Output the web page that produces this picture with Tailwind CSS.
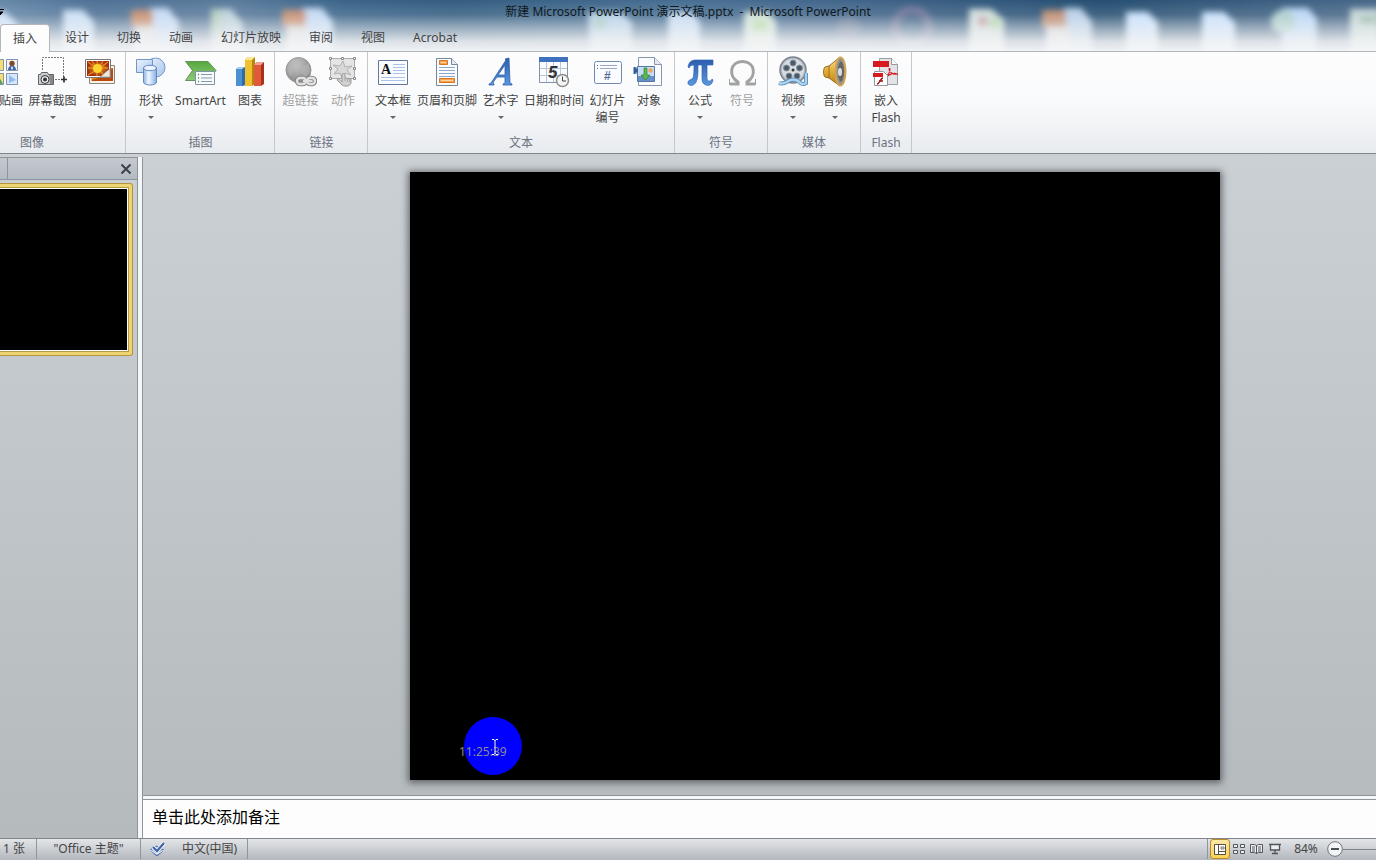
<!DOCTYPE html>
<html lang="zh-CN">
<head>
<meta charset="utf-8">
<title>新建 Microsoft PowerPoint 演示文稿.pptx - Microsoft PowerPoint</title>
<script src="https://cdn.jsdelivr.net/npm/@tailwindcss/browser@4"></script>
</head>
<body class="flex h-screen flex-col overflow-hidden bg-[#c5cacf] font-['Noto_Sans','Noto_Sans_CJK_SC',sans-serif] text-xs text-[#444444]">

<header class="relative flex shrink-0 flex-col overflow-hidden">
  <!-- glass title bar: blurred desktop icons fading to white -->
  <svg class="absolute inset-0 h-full w-full" viewBox="0 0 1376 52" preserveAspectRatio="none" aria-hidden="true">
    <defs>
      <linearGradient id="sky" x1="0" x2="1" y1="0" y2="0"><stop offset="0" stop-color="#6688a9"/><stop offset=".07" stop-color="#4d7094"/><stop offset=".17" stop-color="#5a7b9c"/><stop offset=".25" stop-color="#3a6489"/><stop offset=".33" stop-color="#335d80"/><stop offset=".5" stop-color="#486f93"/><stop offset=".62" stop-color="#41658a"/><stop offset=".8" stop-color="#254e71"/><stop offset="1" stop-color="#49698a"/></linearGradient>
      <linearGradient id="fade" x1="0" x2="0" y1="0" y2="1"><stop offset="0" stop-color="#fff" stop-opacity="0"/><stop offset=".28" stop-color="#f2f3f4" stop-opacity=".14"/><stop offset=".55" stop-color="#f2f3f4" stop-opacity=".55"/><stop offset=".8" stop-color="#f3f4f5" stop-opacity=".88"/><stop offset="1" stop-color="#f6f7f8" stop-opacity=".98"/></linearGradient>
      <filter id="soft" x="-5%" y="-50%" width="110%" height="200%"><feGaussianBlur stdDeviation="3.2"/></filter>
    </defs>
    <rect width="1376" height="52" fill="url(#sky)"/>
    <g filter="url(#soft)">
      <path d="M-5 12h10l13 13v30H-5z" fill="#cfe2fa"/>
      <path d="M63 10h20l11 12v33H63z" fill="#c9dff5"/>
      <path d="M150 8h18l11 14v33h-29z" fill="#c4daf5"/><rect x="131" y="10" width="22" height="17" rx="3" fill="#c58c6c"/><rect x="134" y="27" width="22" height="28" fill="#d9dcde"/>
      <path d="M211 9h20l12 15v31h-32z" fill="#bdd2db"/><path d="M211 9h10v24h-10z" fill="#b3cdbd"/>
      <path d="M302 8h20l11 14v33h-31z" fill="#c4daf5"/><rect x="282" y="10" width="24" height="17" rx="3" fill="#c68d70"/><rect x="286" y="27" width="22" height="28" fill="#d9dcde"/>
      <path d="M588 12h32l12 10v33h-42z" fill="#b5d0e8"/><circle cx="600" cy="24" r="7" fill="#9dc7bf"/>
      <path d="M668 12h23l9 10v33h-32z" fill="#c5dcf3"/>
      <path d="M744 12h24l8 10v33h-32z" fill="#d5e5dd"/><rect x="752" y="20" width="16" height="13" fill="#b1d8a0"/>
      <circle cx="912" cy="27" r="17" fill="none" stroke="#8d7fa5" stroke-width="8" opacity=".6"/><circle cx="848" cy="28" r="12" fill="#7f83a0" opacity=".5"/>
      <path d="M969 9h22l13 11v35h-35z" fill="#d2dfdd"/><rect x="978" y="17" width="9" height="10" fill="#c0919c"/><rect x="989" y="19" width="11" height="10" fill="#a8d39b"/>
      <path d="M1064 8h17l11 14v33h-28z" fill="#b7cfe8"/><rect x="1042" y="10" width="24" height="19" rx="4" fill="#bd8a6e"/><rect x="1046" y="28" width="24" height="27" fill="#d9dadd"/>
      <path d="M1126 12h22l10 11v32h-32z" fill="#c8e1fc"/>
      <path d="M1202 12h22l11 11v32h-33z" fill="#c8e1fc"/>
      <path d="M1282 8h26l9 11v36h-35z" fill="#b9d7f7"/><circle cx="1283" cy="22" r="12" fill="#a9cdc9"/>
      <path d="M1350 9h30v46h-30z" fill="#c3d6d5"/><rect x="1360" y="17" width="16" height="7" fill="#91b3a0"/>
    </g>
    <rect width="1376" height="52" fill="url(#fade)"/>
  </svg>
  <svg class="absolute left-0 top-2 h-2 w-1" viewBox="0 0 4 8" aria-hidden="true"><path d="M0 1.5h4M0 4h3L0 7z" stroke="#000" fill="#000"/></svg>
  <h1 class="relative h-6 whitespace-pre text-center text-xs leading-6 text-[#101820]">新建 Microsoft PowerPoint 演示文稿.pptx  -  Microsoft PowerPoint</h1>
  <nav class="relative flex h-7 border-b border-[#b3b6bb] leading-7">
    <button class="mr-px h-7 rounded-t border border-b-0 border-[#b3b6bb] bg-[#fdfdfe] px-3 leading-6">插入</button>
    <button class="px-[14px]">设计</button>
    <button class="px-[14px]">切换</button>
    <button class="px-[14px]">动画</button>
    <button class="px-[14px]">幻灯片放映</button>
    <button class="px-[14px]">审阅</button>
    <button class="px-[14px]">视图</button>
    <button class="px-[14px]">Acrobat</button>
  </nav>
</header>

<!-- gradients shared by the ribbon icons -->
<svg class="absolute size-0" aria-hidden="true">
  <defs>
    <linearGradient id="blue" x1="0" x2="1" y1="0" y2="1"><stop offset="0" stop-color="#eef5fd"/><stop offset="1" stop-color="#a5c4ec"/></linearGradient>
    <linearGradient id="cyl" x1="0" x2="1"><stop offset="0" stop-color="#8fb5e6"/><stop offset=".4" stop-color="#f0f7ff"/><stop offset="1" stop-color="#85aee3"/></linearGradient>
    <linearGradient id="deep" x1="0" x2="0" y1="0" y2="1"><stop offset="0" stop-color="#2b5eae"/><stop offset="1" stop-color="#5c97df"/></linearGradient>
    <linearGradient id="green" x1="0" x2="0" y1="0" y2="1"><stop offset="0" stop-color="#57a93f"/><stop offset="1" stop-color="#8cc978"/></linearGradient>
    <radialGradient id="globe" cx=".4" cy=".3" r=".7"><stop offset="0" stop-color="#c9c9c9"/><stop offset="1" stop-color="#888"/></radialGradient>
    <linearGradient id="gold" x1="0" x2="0" y1="0" y2="1"><stop offset="0" stop-color="#fbe49a"/><stop offset=".5" stop-color="#e2ac32"/><stop offset="1" stop-color="#b67b18"/></linearGradient>
    <radialGradient id="sun"><stop offset="0" stop-color="#ffd53a"/><stop offset="1" stop-color="#a83010"/></radialGradient>
  </defs>
</svg>

<section class="flex h-[102px] shrink-0 border-b border-[#80868c] bg-linear-to-b from-[#fdfdfe] via-[#f9fafb] to-[#e8ebef] leading-[17px]" aria-label="插入">
  <div class="flex w-[126px] flex-col justify-between overflow-hidden border-r border-[#c3c8ce] pb-[2px] pt-1">
    <div class="flex justify-end whitespace-nowrap pr-1">
      <button class="flex w-[42px] shrink-0 flex-col items-center">
        <svg class="mb-1 size-8" viewBox="0 0 32 32"><g stroke="#8294b3"><path d="M3.500 3.500h11v11h-11zM3.500 17.500h11v11h-11z" fill="#f5df6a"/><path d="M17.500 3.500h11v11h-11z" fill="#f7f2ed"/><path d="M17.500 17.500h11v11h-11z" fill="#d6e8fb"/></g><path d="M5 26l4-7 5 9H5z" fill="#50a260"/><circle cx="23" cy="7.500" r="2.700" fill="#7c4a2b"/><path d="M19 14c0-6 8-6 8 0z" fill="#3c65ae"/><path d="M22 12l1-2 1 2-1 2z" fill="#fff"/><path d="M20 19l7 5-7 3z" fill="#94b9ec"/></svg>
        <span>剪贴画</span></button>
      <button class="flex w-[53px] shrink-0 flex-col items-center">
        <svg class="mb-1 size-8" viewBox="0 0 32 32"><path d="M5.500 14V1.500h21V22M18 23.500h9" fill="none" stroke="#777" stroke-dasharray="2 1"/><path d="M27 20.500v6M24 23.500h6" stroke="#333" stroke-width="1.700"/><path d="M1.500 18.500h2l1-2h6l1 2h5v10h-15z" fill="#c9ccd0" stroke="#666"/><path d="M12 19h4v9h-3z" fill="#888"/><circle cx="8" cy="23.500" r="4" fill="#eee" stroke="#333"/><circle cx="8" cy="23.500" r="2" fill="#333"/></svg>
        <span>屏幕截图</span><span class="mt-[7px] border-x-[3px] border-t-[3px] border-x-transparent border-t-[#666]"></span></button>
      <button class="flex w-[42px] shrink-0 flex-col items-center">
        <svg class="mb-1 size-8" viewBox="0 0 32 32"><path d="M5.500 9.500h25v18h-25z" fill="#f7f2e5" stroke="#8d877c"/><path d="M7.500 12h21v13h-21z" fill="#d88618"/><path d="M8 24l10-3 11-9v13H8z" fill="#b94a0e"/><path d="M1.500 3.500h25v18h-25z" fill="#fff" stroke="#777"/><path d="M3 5h22v15H3z" fill="#7c2112"/><path d="M3 5h22v15H3z" fill="url(#sun)" opacity=".8"/><path d="M4 6l7 5M13 5l1 6M24 6l-7 5M4 19l7-4M13 20v-5M20 19l-4-4M4 12h7M24 12h-7M8 5l4 6M19 5l-4 6" stroke="#ee8b16" stroke-width="1.300"/><circle cx="13.500" cy="12.500" r="4.500" fill="#ffd42f"/><path d="M16 21c3-2 5-5 10-8v8z" fill="#eee8da" stroke="#999" stroke-width=".7"/></svg>
        <span>相册</span><span class="mt-[7px] border-x-[3px] border-t-[3px] border-x-transparent border-t-[#666]"></span></button>
    </div>
    <div class="pl-5 text-[#6b7280]">图像</div>
  </div>
  <div class="flex flex-col justify-between border-r border-[#c3c8ce] pb-[2px] pl-1 pr-[3px] pt-1">
    <div class="flex whitespace-nowrap">
      <button class="flex w-[42px] flex-col items-center">
        <svg class="mb-1 size-8" viewBox="0 0 32 32"><circle cx="20.500" cy="11.500" r="9.500" fill="url(#blue)" stroke="#7296c7"/><path d="M1.500 3.500h16v13h-16z" fill="url(#blue)" stroke="#7296c7"/><path d="M8.500 12v14c0 4 13 4 13 0V12z" fill="url(#cyl)" stroke="#6489be"/><ellipse cx="15" cy="12" rx="6.500" ry="2.700" fill="#eaf3ff" stroke="#6489be"/></svg>
        <span>形状</span><span class="mt-[7px] border-x-[3px] border-t-[3px] border-x-transparent border-t-[#666]"></span></button>
      <button class="flex w-[57px] flex-col items-center">
        <svg class="mb-1 size-8" viewBox="0 0 32 32"><path d="M.500 5.500H23l8 9-8 10H.500l7-10z" fill="url(#green)" stroke="#64925a"/><path d="M10.500 15.500h19v13h-19z" fill="#f7fafc" stroke="#8193a5"/><path d="M13 18.500h1M13 22h1M13 25.500h1" stroke="#3b8f42" stroke-width="1.500"/><path d="M16 18.500h11M16 22h11M16 25.500h11" stroke="#8799a8"/></svg>
        <span>SmartArt</span></button>
      <button class="flex w-[42px] flex-col items-center">
        <svg class="mb-1 size-8" viewBox="0 0 32 32"><path d="M2 13l3-2h6v18l-2 1H2z" fill="#2e6cae"/><path d="M2 13h6v17H2z" fill="#4b91cf"/><path d="M2 13l3-2h6l-3 2z" fill="#a6d0ee"/><path d="M11 4l3-3h7v27l-3 2h-7z" fill="#b8860f"/><path d="M11 4h7v26h-7z" fill="#f0c12c"/><path d="M11 4l3-3h7l-3 3z" fill="#fbe98f"/><path d="M20 9l3-3h7v22l-3 2h-7z" fill="#a9301a"/><path d="M20 9h7v21h-7z" fill="#df593a"/><path d="M20 9l3-3h7l-3 3z" fill="#f2a18e"/></svg>
        <span>图表</span></button>
    </div>
    <div class="text-center text-[#6b7280]">插图</div>
  </div>
  <div class="flex flex-col justify-between border-r border-[#c3c8ce] pb-[2px] pl-1 pr-[3px] pt-1">
    <div class="flex whitespace-nowrap text-[#a0a0a0]">
      <button class="flex w-[43px] flex-col items-center">
        <svg class="mb-1 size-8" viewBox="0 0 32 32"><circle cx="13.500" cy="14" r="12.500" fill="url(#globe)" stroke="#999"/><path d="M4 8l7-4 5 3-2 5-6 2-2 6-3-4zM17 10l7-2 1 8-4 5-5-4z" fill="#b5b5b5" opacity=".6"/><g fill="none" stroke="#888" stroke-width="4.500"><rect x="12" y="22" width="9" height="6" rx="3"/><rect x="22" y="22" width="8" height="6" rx="3"/></g><g fill="none" stroke="#e2e2e2" stroke-width="2.300"><rect x="12" y="22" width="9" height="6" rx="3"/><rect x="22" y="22" width="8" height="6" rx="3"/><path d="M18 25h7"/></g></svg>
        <span>超链接</span></button>
      <button class="flex w-[42px] flex-col items-center">
        <svg class="mb-1 size-8" viewBox="0 0 32 32"><path d="M3.500 2.500h24v20h-24z" fill="#e5e5e5" stroke="#aaa"/><path d="M16 5l2 6 7-1-5 4 4 5-6-2-3 5-2-5-6 1 4-5-5-4 7 1z" fill="#d8d8d8" stroke="#b2b2b2"/><g fill="#fff" stroke="#888"><path d="M2.500 1.500h2v2h-2zM14.500 1.500h2v2h-2zM26.500 1.500h2v2h-2zM2.500 11.500h2v2h-2zM26.500 11.500h2v2h-2zM2.500 21.500h2v2h-2zM26.500 21.500h2v2h-2z"/></g><path d="M15 26v-7c0-2 3-2 3 0v3l6 1v4c-1 4-8 4-10 1l-4-4c1-2 3-1 5 2z" fill="#d0d0d0" stroke="#999"/><path d="M18 22v3M20.500 22.500v3M22.500 23v3" stroke="#aaa"/></svg>
        <span>动作</span></button>
    </div>
    <div class="text-center text-[#6b7280]">链接</div>
  </div>
  <div class="flex flex-col justify-between border-r border-[#c3c8ce] pb-[2px] pl-1 pr-1 pt-1">
    <div class="flex whitespace-nowrap">
      <button class="flex w-[42px] flex-col items-center">
        <svg class="mb-1 size-8" viewBox="0 0 32 32"><path d="M1.500 4.500h29v24h-29z" fill="#fafcff" stroke="#61779d"/><path d="M16 8.500h12M16 11.500h12M16 14.500h12M16 17.500h12M4 21.500h24M4 24.500h24" stroke="#a9c2e8"/><text x="4" y="18" font-family="Liberation Serif" font-weight="700" font-size="14" fill="#111">A</text></svg>
        <span>文本框</span><span class="mt-[7px] border-x-[3px] border-t-[3px] border-x-transparent border-t-[#666]"></span></button>
      <button class="flex w-[66px] flex-col items-center">
        <svg class="mb-1 size-8" viewBox="0 0 32 32"><path d="M5.500 2.500h15l6 6v21h-21z" fill="#fbfcff" stroke="#75889e"/><path d="M20.500 2.500v6h6" fill="#e2e9f3" stroke="#75889e"/><path d="M8 11.500h16M8 14.500h16M8 17.500h16M8 20.500h16" stroke="#8fa6c8"/><path d="M8.500 4.500h8v4h-8zM8.500 22.500h15v4h-15z" fill="#f5a44f" stroke="#d57620"/><path d="M10 6.500h5M10 24.500h12" stroke="#fcd2a0"/></svg>
        <span>页眉和页脚</span></button>
      <button class="flex w-[41px] flex-col items-center">
        <svg class="mb-1 size-8" viewBox="0 0 32 32"><path d="M24 2l1 25 2 1v1H18v-1l2-1v-6h-8l-3 4-1 2 1 1v1H4v-1l2-1L21 4l-1-1zM20 9l-7 10h7z" fill="url(#deep)" stroke="#2e61ac" stroke-width=".8"/></svg>
        <span>艺术字</span><span class="mt-[7px] border-x-[3px] border-t-[3px] border-x-transparent border-t-[#666]"></span></button>
      <button class="flex w-[66px] flex-col items-center">
        <svg class="mb-1 size-8" viewBox="0 0 32 32"><path d="M1.500 1.500h28v25h-28z" fill="#f9fbff" stroke="#8393aa"/><path d="M1 1h29v5H1z" fill="#3e70c0"/><path d="M8.500 6v20M15.500 6v20M22.500 6v20M2 12.500h27M2 19.500h27" stroke="#bac6d6"/><text x="10" y="22" font-family="Liberation Sans" font-weight="700" font-style="italic" font-size="17" fill="#333">5</text><circle cx="24.500" cy="24.500" r="6" fill="#f5f5f5" stroke="#8b8b8b" stroke-width="1.500"/><path d="M24.500 20.500v4.500h3.500" fill="none" stroke="#444"/></svg>
        <span>日期和时间</span></button>
      <button class="flex w-[41px] flex-col items-center">
        <svg class="mb-1 size-8" viewBox="0 0 32 32"><rect x="2.500" y="5.500" width="27" height="22" rx="2" fill="#fafcff" stroke="#7188b3"/><path d="M8 9.500h17M8 12.500h17" stroke="#97a9c7"/><path d="M5 9.500h1M5 12.500h1" stroke="#667"/><text x="12" y="24" font-family="Liberation Sans" font-weight="700" font-size="12" fill="#586d9b">#</text></svg>
        <span>幻灯片</span><span>编号</span></button>
      <button class="flex w-[42px] flex-col items-center">
        <svg class="mb-1 size-8" viewBox="0 0 32 32"><path d="M5.500 1.500h16l7 7v21h-23z" fill="#f9fbff" stroke="#8997ae"/><path d="M21.500 1.500v7h7" fill="#e2e8f2" stroke="#8997ae"/><path d="M4.500 10.500h17v15h-17z" fill="#c5ddf7" stroke="#5675a3"/><path d="M5 20h16v5H5z" fill="#6592c9"/><circle cx="17.500" cy="14.500" r="2.200" fill="#f1a35f"/><path d="M11 12h3v7h3l-4.500 5L8 19h3z" fill="#5fba4c" stroke="#2c7c31" stroke-width=".7"/><path d="M3 11v7M1 11l4 3.500L1 18z" fill="#345c99" stroke="#345c99"/></svg>
        <span>对象</span></button>
    </div>
    <div class="text-center text-[#6b7280]">文本</div>
  </div>
  <div class="flex flex-col justify-between border-r border-[#c3c8ce] pb-[2px] pl-1 pr-1 pt-1">
    <div class="flex whitespace-nowrap">
      <button class="flex w-[42px] flex-col items-center">
        <svg class="mb-1 size-8" viewBox="0 0 32 32"><path d="M4 11C5 6 7 4 12 4h17v5h-6v13c0 4 4 4 5 1l1 1c-1 5-4 6-7 5-3-1-4-3-4-7V9h-4c0 9 0 13-2 17-2 5-9 4-8 0 1-3 4-2 5-4 1-3 1-8 1-13-3 0-4 1-5 3z" fill="url(#deep)" stroke="#2f67b5" stroke-width=".7"/></svg>
        <span>公式</span><span class="mt-[7px] border-x-[3px] border-t-[3px] border-x-transparent border-t-[#666]"></span></button>
      <button class="flex w-[42px] flex-col items-center text-[#a0a0a0]">
        <svg class="mb-1 size-8" viewBox="0 0 32 32"><path d="M4 28h8v-2C2 20 4 5.500 16.500 5.500S31 20 21 26v2h8" fill="none" stroke="#a2a2a2" stroke-width="3"/><path d="M3.500 23v6M29.500 23v6" stroke="#a2a2a2"/></svg>
        <span>符号</span></button>
    </div>
    <div class="text-center text-[#6b7280]">符号</div>
  </div>
  <div class="flex flex-col justify-between border-r border-[#c3c8ce] pb-[2px] pl-1 pr-1 pt-1">
    <div class="flex whitespace-nowrap">
      <button class="flex w-[42px] flex-col items-center">
        <svg class="mb-1 size-8" viewBox="0 0 32 32"><circle cx="16" cy="14" r="13" fill="#b3bac3" stroke="#7b8590" stroke-width="1.500"/><circle cx="16" cy="14" r="11" fill="#d7dce1"/><g fill="#4b5a69" stroke="#87919b"><circle cx="16" cy="7" r="3"/><circle cx="9.500" cy="12" r="3"/><circle cx="22.500" cy="12" r="3"/><circle cx="12" cy="20" r="3"/><circle cx="20" cy="20" r="3"/></g><circle cx="16" cy="14" r="1.500" fill="#333"/><path d="M2 27c7 3 10-6 17-3 5 2 5 6 10 3V17" fill="none" stroke="#557fa9" stroke-width="4"/><path d="M2 27c7 3 10-6 17-3 5 2 5 6 10 3V17" fill="none" stroke="#a9d3f0" stroke-width="2.500"/></svg>
        <span>视频</span><span class="mt-[7px] border-x-[3px] border-t-[3px] border-x-transparent border-t-[#666]"></span></button>
      <button class="flex w-[42px] flex-col items-center">
        <svg class="mb-1 size-8" viewBox="0 0 32 32"><path d="M6 11l4-1L21 1v29L10 22l-4-1c-2-2-2-8 0-10z" fill="url(#gold)" stroke="#9b6a22"/><path d="M10 10v12" stroke="#9b6a22"/><ellipse cx="21.500" cy="15.500" rx="5" ry="14" fill="#8e8e8e" stroke="#d0a557" stroke-width="2"/><ellipse cx="22" cy="15.500" rx="3" ry="10" fill="#666"/><ellipse cx="21" cy="16" rx="2" ry="4" fill="#ddd"/></svg>
        <span>音频</span><span class="mt-[7px] border-x-[3px] border-t-[3px] border-x-transparent border-t-[#666]"></span></button>
    </div>
    <div class="text-center text-[#6b7280]">媒体</div>
  </div>
  <div class="flex flex-col justify-between border-r border-[#c3c8ce] pb-[2px] pl-1 pr-1 pt-1">
    <button class="flex w-[42px] flex-col items-center">
      <svg class="mb-1 size-8" viewBox="0 0 32 32"><path d="M9.500 2.500h12l6 6v20h-18z" fill="#e1e3e6" stroke="#9c9fa3"/><path d="M21.500 2.500v6h6" fill="#fff" stroke="#999"/><path d="M3 5h16v6H3z" fill="#d71920"/><path d="M17 20c4-4 3-9 2-7 0 3 4 6 8 5-4-2-7 1-10 2" fill="none" stroke="#d71920" stroke-width="1.200"/><path d="M4.500 15.500h9l4 4v10h-13z" fill="#fff" stroke="#999"/><path d="M3 17h10v4H3z" fill="#d71920"/><path d="M13 22c-3 0-3 6-6 6M9 25h4" fill="none" stroke="#9d1016" stroke-width="1.500"/></svg>
      <span>嵌入</span><span>Flash</span></button>
    <div class="text-center text-[#6b7280]">Flash</div>
  </div>
</section>

<main class="flex min-h-0 flex-1 bg-linear-to-b from-[#cbd0d5] to-[#b5babd] pt-[3px]">
  <aside class="flex w-[137px] shrink-0 flex-col border-t border-[#8d949b]">
    <div class="flex h-[22px] items-center border-b border-[#8d949b] bg-linear-to-b from-[#c5cad0] to-[#b4bac1]">
      <div class="h-full w-2 border-r border-[#8d949b]"></div>
      <button class="ml-auto mr-[5px]" aria-label="关闭"><svg class="block size-3" viewBox="0 0 12 12"><path d="M1.500 1.500l9 9M10.500 1.500l-9 9" stroke="#3c424a" stroke-width="2"/></svg></button>
    </div>
    <div class="mr-1 mt-[3px] rounded-r-[3px] border border-l-0 border-[#b8933f] bg-[#efd572] py-1 pr-1">
      <div class="h-[163px] border border-l-0 border-white bg-black outline outline-[#b39a4b]"></div>
    </div>
  </aside>
  <div class="w-[6px] shrink-0 border-x border-[#8d949b] bg-[#f4f6f8]"></div>
  <div class="flex min-w-0 flex-1 flex-col">
    <div class="min-h-0 flex-1 overflow-hidden pl-[267px] pt-[15px]">
      <div class="relative aspect-[4/3] w-[810px] bg-black shadow-[0_1px_7px_2px_rgba(60,64,68,0.7)]">
        <div class="absolute bottom-[5px] left-[54px] size-[58px] rounded-full bg-[#0000fe]"></div>
        <span class="absolute bottom-5 left-[49px] text-[#8b8b93]">11:25:39</span>
        <svg class="absolute bottom-6 left-[81px] h-[18px] w-2" viewBox="0 0 8 18"><path d="M1 1.500h2l1 1 1-1h2M4 2v14M1 16.500h2l1-1 1 1h2" fill="none" stroke="#fff"/></svg>
      </div>
    </div>
    <div class="h-[5px] shrink-0 border-y border-[#8d949b] bg-[#f4f6f8]"></div>
    <textarea class="block h-[38px] shrink-0 resize-none overflow-hidden bg-[#fdfdfd] px-[9px] py-[5px] text-base text-black placeholder:text-black" aria-label="备注" placeholder="单击此处添加备注"></textarea>
  </div>
</main>

<footer class="flex h-[22px] shrink-0 items-center border-t border-[#80868c] bg-linear-to-b from-[#e3e5e8] to-[#b3b8be] pb-px leading-5">
  <span class="w-[37px] border-r border-[#8f959c] pl-[3px] whitespace-nowrap">1 张</span>
  <span class="w-[104px] border-r border-[#8f959c] text-center whitespace-nowrap">"Office 主题"</span>
  <button class="ml-2 mr-4" aria-label="拼写检查"><svg class="block h-4 w-[17px]" viewBox="0 0 17 16"><path d="M1 9l6-4 8 4-7 6z" fill="#8fabd9" stroke="#4a659b"/><path d="M1 9l7 4 7-4" fill="none" stroke="#e7f0ff"/><path d="M4 6l4 4 7-8" fill="none" stroke="#fff" stroke-width="4"/><path d="M4 6l4 4 7-8" fill="none" stroke="#4163a7" stroke-width="2.300"/></svg></button>
  <button>中文(中国)</button>
  <div class="ml-[10px] h-5 w-px bg-[#8f959c]"></div>
  <div class="ml-auto h-5 w-px bg-[#8f959c]"></div>
  <button class="ml-[2px] flex h-5 w-5 items-center justify-center rounded-[3px] border border-[#b98a25] bg-linear-to-b from-[#fbe9a5] to-[#f7d251]" aria-label="普通视图"><svg class="h-[11px] w-3" viewBox="0 0 12 11"><path d="M.5.5h11v10H.5zM4.500.5v10M4.500 7.500h7" fill="#fff" stroke="#5a5040"/><path d="M7 3h3v2H7z" fill="none" stroke="#777"/></svg></button>
  <button class="ml-[3px]" aria-label="幻灯片浏览"><svg class="block h-[11px] w-3" viewBox="0 0 12 11"><path d="M.5.5h4v3h-4zM7.500.5h4v3h-4zM.5 6.500h4v3h-4zM7.500 6.500h4v3h-4z" fill="#eee" stroke="#50565e"/></svg></button>
  <button class="ml-[5px]" aria-label="阅读视图"><svg class="block h-3 w-[13px]" viewBox="0 0 13 12"><path d="M.5 1.500h4l2 1 2-1h4v8h-4l-2 1-2-1h-4zM6.500 2v9M2 4h3M2 6h3M2 8h3M8 4h3M8 6h3M8 8h3" fill="#eee" stroke="#50565e"/></svg></button>
  <button class="ml-[6px]" aria-label="幻灯片放映"><svg class="block h-3 w-3" viewBox="0 0 12 12"><path d="M0 1.500h12M1.500 2v5h9V2M6 7v3M3 10.500h6" fill="#eee" stroke="#50565e" stroke-width="1.300"/></svg></button>
  <button class="ml-3 w-[26px] text-center">84%</button>
  <button class="ml-2" aria-label="缩小"><svg class="block size-4" viewBox="0 0 16 16"><circle cx="8" cy="8" r="7.300" fill="#f3f4f6" stroke="#6e747c"/><path d="M4 8h8" stroke="#4a4f57" stroke-width="2"/></svg></button>
  <div class="h-px w-[33px] bg-[#7e848c]"></div>
</footer>
</body>
</html>
